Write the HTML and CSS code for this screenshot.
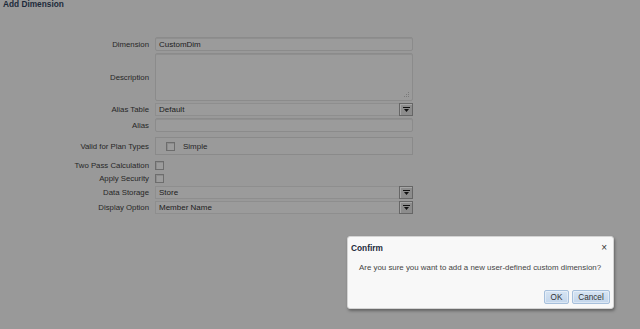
FILE: index.html
```html
<!DOCTYPE html>
<html>
<head>
<meta charset="utf-8">
<link rel="stylesheet" href="styles.css">
</head>
<body>
<div class="page">
  <h1 class="title">Add Dimension</h1>
  <div class="form">
    <div class="row r-dim">
      <label class="lbl">Dimension</label>
      <div class="field input">CustomDim</div>
    </div>
    <div class="row r-desc">
      <label class="lbl">Description</label>
      <div class="field textarea">
        <svg class="grip" width="6" height="6" viewBox="0 0 6 6"><rect x="4" y="0" width="1" height="1"/><rect x="2" y="2" width="1" height="1"/><rect x="4" y="2" width="1" height="1"/><rect x="0" y="4" width="1" height="1"/><rect x="2" y="4" width="1" height="1"/><rect x="4" y="4" width="1" height="1"/></svg>
      </div>
    </div>
    <div class="row r-sel">
      <label class="lbl">Alias Table</label>
      <div class="field select"><span class="val">Default</span><span class="btn"><svg width="7" height="5" viewBox="0 0 7 5"><rect x="0" y="0" width="7" height="1"/><path d="M1 2h5l-2.5 3z"/></svg></span></div>
    </div>
    <div class="row r-alias">
      <label class="lbl">Alias</label>
      <div class="field input"></div>
    </div>
    <div class="row r-valid">
      <label class="lbl">Valid for Plan Types</label>
      <div class="field group"><span class="chk"></span><span class="chk-text">Simple</span></div>
    </div>
    <div class="row r-chk r-two">
      <label class="lbl">Two Pass Calculation</label>
      <div class="field plain"><span class="chk"></span></div>
    </div>
    <div class="row r-chk">
      <label class="lbl">Apply Security</label>
      <div class="field plain"><span class="chk"></span></div>
    </div>
    <div class="row r-sel r-store">
      <label class="lbl">Data Storage</label>
      <div class="field select"><span class="val">Store</span><span class="btn"><svg width="7" height="5" viewBox="0 0 7 5"><rect x="0" y="0" width="7" height="1"/><path d="M1 2h5l-2.5 3z"/></svg></span></div>
    </div>
    <div class="row r-sel r-disp">
      <label class="lbl">Display Option</label>
      <div class="field select"><span class="val">Member Name</span><span class="btn"><svg width="7" height="5" viewBox="0 0 7 5"><rect x="0" y="0" width="7" height="1"/><path d="M1 2h5l-2.5 3z"/></svg></span></div>
    </div>
  </div>
</div>

<div class="dialog">
  <div class="dlg-head">
    <span class="dlg-title">Confirm</span>
    <span class="dlg-close">&#215;</span>
  </div>
  <div class="dlg-msg">Are you sure you want to add a new user-defined custom dimension?</div>
  <div class="dlg-foot">
    <button class="b ok">OK</button>
    <button class="b cancel">Cancel</button>
  </div>
</div>
</body>
</html>
```

FILE: styles.css
```css
html, body {
  margin: 0;
  padding: 0;
}
body {
  width: 640px;
  height: 329px;
  background: #999999;
  font-family: "Liberation Sans", Arial, sans-serif;
  font-size: 8px;
  color: #262626;
  overflow: hidden;
  position: relative;
}
.page {
  padding: 0 0 0 3px;
}
.title {
  margin: 0;
  font-size: 8.3px;
  font-weight: bold;
  color: #1c2a3a;
  line-height: 9px;
  height: 9px;
}
.form {
  display: flex;
  flex-direction: column;
  margin-top: 28px;
}
.row {
  display: grid;
  grid-template-columns: 146px 258px;
  column-gap: 6px;
  align-items: center;
  margin-top: 2px;
}
.row.r-dim { margin-top: 0; height: 14px; }
.r-desc { height: 48px; }
.r-sel { height: 13px; }
.r-alias { height: 14px; }
.r-valid { height: 18px; margin-top: 5px; }
.r-chk { height: 12px; margin-top: 1px; }
.r-chk.r-two { margin-top: 4px; }
.r-sel.r-store { margin-top: 2px; }
.r-sel.r-disp { margin-top: 2px; }
.lbl {
  text-align: right;
  white-space: nowrap;
  color: #272727;
  font-size: 7.8px;
}
.field {
  box-sizing: border-box;
  height: 100%;
}
.input, .textarea {
  border: 1px solid #8b8b8b;
  border-radius: 2px;
  background: #9b9b9b;
  box-shadow: inset 0 1px 0 #8f8f8f;
  padding: 0 3px;
  display: flex;
  align-items: center;
  color: #202020;
}
.textarea {
  position: relative;
}
.grip {
  position: absolute;
  right: 2px;
  bottom: 2px;
  fill: #7a7a7a;
}
.select {
  border: 1px solid #8e8e8e;
  background: #9b9b9b;
  display: flex;
  align-items: stretch;
  color: #202020;
}
.select .val {
  flex: 1;
  padding-left: 3px;
  display: flex;
  align-items: center;
}
.select .btn {
  width: 12px;
  margin: -1px -1px -1px 0;
  border: 1px solid #666;
  background: #8c8c8c;
  box-shadow: inset 1px 1px 0 #a6a6a6;
  display: flex;
  align-items: center;
  justify-content: center;
}
.select .btn svg { fill: #111; }
.group {
  border: 1px solid #8a8a8a;
  background: #9a9a9a;
  display: flex;
  align-items: center;
  padding-left: 10px;
}
.chk {
  box-sizing: border-box;
  width: 9px;
  height: 9px;
  border: 1px solid #6d6d6d;
  background: #9c9c9c;
  box-shadow: inset 1px 1px 0 #8c8c8c;
  display: inline-block;
}
.chk-text {
  margin-left: 8px;
}
.plain {
  display: flex;
  align-items: center;
}

.dialog {
  position: absolute;
  left: 347px;
  top: 236px;
  width: 267px;
  height: 73px;
  box-sizing: border-box;
  background: #f8f8f8;
  border: 1px solid #d4d4d4;
  border-radius: 3px;
  box-shadow: 1px 2px 3px rgba(0,0,0,0.35);
  display: flex;
  flex-direction: column;
}
.dlg-head {
  display: flex;
  justify-content: space-between;
  align-items: center;
  height: 18px;
  padding: 2px 6px 0 3px;
}
.dlg-title {
  font-weight: bold;
  font-size: 8.3px;
  color: #1c2a3a;
}
.dlg-close {
  font-size: 10px;
  color: #333;
  line-height: 10px;
}
.dlg-msg {
  margin-top: 6px;
  padding-left: 11px;
  color: #444;
  font-size: 7.9px;
  white-space: nowrap;
}
.dlg-foot {
  margin-top: auto;
  display: flex;
  justify-content: flex-end;
  gap: 3px;
  padding: 0 3px 4px 0;
}
.b {
  font-family: "Liberation Sans", Arial, sans-serif;
  font-size: 8.2px;
  color: #333;
  height: 14px;
  padding: 0;
  border: 1px solid #a7c0dc;
  border-radius: 2px;
  background: linear-gradient(#d6e4f3, #c3d6ec);
  box-shadow: inset 0 0 0 1px rgba(255,255,255,0.4);
}
.ok { width: 25px; }
.cancel { width: 38px; }
```
